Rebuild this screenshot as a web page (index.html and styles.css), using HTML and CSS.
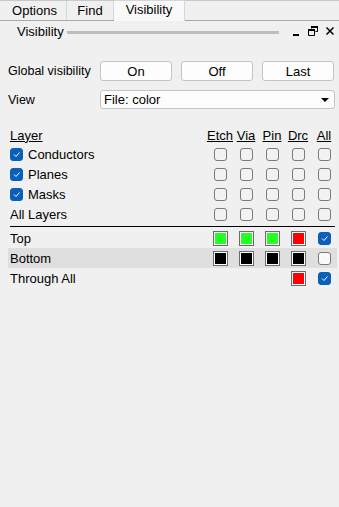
FILE: index.html
```html
<!DOCTYPE html>
<html lang="en">
<head>
  <meta charset="UTF-8">
  <title>Visibility</title>
  <link rel="stylesheet" href="styles.css">
</head>
<body>
  <div class="tabbar">
    <div class="tab options">Options</div>
    <div class="tab find">Find</div>
    <div class="tab active">Visibility</div>
  </div>

  <div class="titlebar">
    <span class="title">Visibility</span>
    <span class="grip"></span>
    <svg class="tool" width="10" height="10" viewBox="0 0 10 10"><rect x="2" y="8" width="6" height="2" fill="#000"/></svg>
    <svg class="tool" width="10" height="10" viewBox="0 0 10 10"><path d="M3.5 0.5h6v5h-2M3.5 0.5v2M0.5 3.5h6v6h-6z" fill="none" stroke="#000"/><rect x="3" y="0" width="7" height="2" fill="#000"/><rect x="0" y="3" width="7" height="2" fill="#000"/></svg>
    <svg class="tool" width="10" height="10" viewBox="0 0 10 10"><path d="M1.5 1.5l7 7M8.5 1.5l-7 7" stroke="#000" stroke-width="1.5"/></svg>
  </div>

  <div class="panel">
    <div class="form-row">
      <span class="label">Global visibility</span>
      <div class="buttons">
        <button class="btn">On</button>
        <button class="btn">Off</button>
        <button class="btn">Last</button>
      </div>
    </div>
    <div class="form-row">
      <span class="label">View</span>
      <div class="select">File: color<span class="arrow"></span></div>
    </div>

    <div class="layers">
      <div class="row head">
        <span class="name u">Layer</span>
        <span class="u">Etch</span><span class="u">Via</span><span class="u">Pin</span><span class="u">Drc</span><span class="u">All</span>
      </div>
      <div class="row">
        <span class="name"><i class="cb on"></i>Conductors</span>
        <i class="cb"></i><i class="cb"></i><i class="cb"></i><i class="cb"></i><i class="cb"></i>
      </div>
      <div class="row">
        <span class="name"><i class="cb on"></i>Planes</span>
        <i class="cb"></i><i class="cb"></i><i class="cb"></i><i class="cb"></i><i class="cb"></i>
      </div>
      <div class="row">
        <span class="name"><i class="cb on"></i>Masks</span>
        <i class="cb"></i><i class="cb"></i><i class="cb"></i><i class="cb"></i><i class="cb"></i>
      </div>
      <div class="row">
        <span class="name">All Layers</span>
        <i class="cb"></i><i class="cb"></i><i class="cb"></i><i class="cb"></i><i class="cb"></i>
      </div>
    </div>

    <div class="separator"></div>

    <div class="layers">
      <div class="row">
        <span class="name">Top</span>
        <i class="sw green"></i><i class="sw green"></i><i class="sw green"></i><i class="sw red"></i><i class="cb on"></i>
      </div>
      <div class="row shaded">
        <span class="name">Bottom</span>
        <i class="sw black"></i><i class="sw black"></i><i class="sw black"></i><i class="sw black"></i><i class="cb white"></i>
      </div>
      <div class="row">
        <span class="name">Through All</span>
        <span></span><span></span><span></span><i class="sw red"></i><i class="cb on"></i>
      </div>
    </div>
  </div>
</body>
</html>
```

FILE: styles.css
```css
body {
  margin: 0;
  background: #f0f0f0;
  font-family: 'Liberation Sans', Arial, sans-serif;
  font-size: 12px;
  color: #000;
}

.tabbar {
  display: flex;
  height: 21px;
  padding-left: 3px;
  border-top: 1px solid #c8c8c8;
  border-bottom: 1px solid #a8a8a8;
  box-sizing: border-box;
  align-items: flex-end;
}

.tab {
  height: 19px;
  line-height: 19px;
  text-align: center;
  border-right: 1px solid #d6d6d6;
  font-size: 13px;
}

.tab.options { width: 63px; }
.tab.find { width: 46px; }

.tab.active {
  width: 70px;
  background: #f9f9f9;
  height: 20px;
  line-height: 17px;
  margin-bottom: -1px;
  border-top: 1px solid #d6d6d6;
}

.titlebar {
  display: flex;
  align-items: center;
  height: 20px;
  padding: 0 4px 0 17px;
}

.title {
  font-size: 13px;
}

.grip {
  flex: 1;
  height: 3px;
  background: #bdbdbd;
  margin: 3px 8px 0 3px;
}

.tool {
  margin-left: 7px;
  flex: none;
}

.tool:first-of-type {
  margin-left: 4px;
}

.panel {
  padding: 20px 4px 0 8px;
}

.form-row {
  display: grid;
  grid-template-columns: 92px 1fr;
  align-items: center;
  margin-bottom: 9px;
}

.label {
  font-size: 12.5px;
}

.buttons {
  display: grid;
  grid-template-columns: repeat(3, 1fr);
  gap: 9px;
  margin-right: 1px;
}

.btn {
  height: 20px;
  border: 1px solid #c4c4c4;
  border-radius: 3px;
  background: #fdfdfd;
  font-family: inherit;
  font-size: 13px;
  padding: 0;
}

.select {
  position: relative;
  height: 19px;
  line-height: 17px;
  box-sizing: border-box;
  border: 1px solid #c4c4c4;
  border-radius: 3px;
  background: #fdfdfd;
  padding-left: 3px;
  font-size: 13px;
}

.arrow {
  position: absolute;
  right: 5px;
  top: 7px;
  border-left: 4px solid transparent;
  border-right: 4px solid transparent;
  border-top: 4px solid #000;
}

.layers {
  margin-right: -2px;
}

.row {
  display: grid;
  grid-template-columns: 1fr repeat(5, 26px);
  justify-items: center;
  align-items: center;
  height: 20px;
  font-size: 13px;
}

.row.head {
  height: 18px;
  margin-top: 17px;
}

.row.shaded {
  background: #dfdfdf;
}

.name {
  justify-self: start;
  display: flex;
  align-items: center;
  gap: 5px;
  padding-left: 2px;
}

.u {
  text-decoration: underline;
}

.cb {
  display: block;
  width: 13px;
  height: 13px;
  box-sizing: border-box;
  border: 1px solid #7a7a7a;
  border-radius: 3px;
  background: #f2f2f2;
}

.cb.white {
  background: #fafafa;
}

.cb.on {
  border-color: #0a5fb8;
  background: #0a5fb8 url("data:image/svg+xml;utf8,<svg xmlns='http://www.w3.org/2000/svg' width='11' height='11'><path d='M3 5.5l2 2 3.5-4' fill='none' stroke='white' stroke-width='1'/></svg>") center no-repeat;
}

.separator {
  height: 1px;
  background: #000;
  margin: 2px 0 1px 2px;
}

.sw {
  display: block;
  width: 15px;
  height: 15px;
  box-sizing: border-box;
  border: 1px solid #6b6b6b;
  box-shadow: inset 0 0 0 1px #fff;
}

.sw.green { background: #22ff22; }
.sw.red { background: #ff0000; }
.sw.black { background: #000; }
```
